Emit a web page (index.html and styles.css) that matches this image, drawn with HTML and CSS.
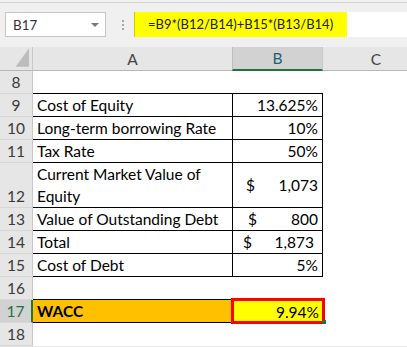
FILE: index.html
```html
<!DOCTYPE html>
<html>
<head>
<meta charset="utf-8">
<link rel="stylesheet" href="styles.css">
</head>
<body>
<div class="toolbar">
  <div class="namebox"><span>B17</span><span class="caret"></span></div>
  <div class="grip"><i></i><i></i><i></i></div>
  <div class="formula"><span class="formula-text">=B9*(B12/B14)+B15*(B13/B14)</span></div>
</div>
<div class="sheet">
  <div class="corner"><svg width="33" height="23" viewBox="0 0 33 23"><polygon points="30,1 30,20 16,20" fill="#bdbdbd"/></svg></div>
  <div class="ch">A</div>
  <div class="ch sel">B</div>
  <div class="ch">C</div>

  <div class="rh">8</div><div class="c top"></div><div class="c top"></div><div class="c"></div>
  <div class="rh">9</div><div class="c t">Cost of Equity</div><div class="c t num">13.625%</div><div class="c"></div>
  <div class="rh">10</div><div class="c t">Long-term borrowing Rate</div><div class="c t num">10%</div><div class="c"></div>
  <div class="rh">11</div><div class="c t">Tax Rate</div><div class="c t num">50%</div><div class="c"></div>
  <div class="rh">12</div><div class="c t wrap">Current Market Value of<br>Equity</div><div class="c t acct"><span>$</span><span>1,073</span></div><div class="c"></div>
  <div class="rh">13</div><div class="c t">Value of Outstanding Debt</div><div class="c t acct acct-wide"><span>$</span><span>800</span></div><div class="c"></div>
  <div class="rh">14</div><div class="c t">Total</div><div class="c t acct acct-shift"><span>$</span><span>1,873</span></div><div class="c"></div>
  <div class="rh">15</div><div class="c t">Cost of Debt</div><div class="c t num">5%</div><div class="c"></div>
  <div class="rh">16</div><div class="c top"></div><div class="c"></div><div class="c"></div>
  <div class="rh sel">17</div><div class="c wacc">WACC</div><div class="c num result">9.94%<span class="handle"></span></div><div class="c"></div>
  <div class="rh">18</div><div class="c"></div><div class="c"></div><div class="c"></div>
</div>
</body>
</html>
```

FILE: styles.css
```css
html, body {
  margin: 0;
  padding: 0;
  background: #e6e6e6;
  overflow: hidden;
}

.toolbar {
  height: 47px;
  box-sizing: border-box;
  padding: 12px 0 0 5px;
  display: flex;
  align-items: flex-start;
  background: linear-gradient(#f0f0f0 0 2px, #d5d5d5 2px 3px, #f0f0f0 3px);
  font-family: Lato, "Liberation Sans", sans-serif;
  font-size: 13px;
}

.namebox {
  width: 101px;
  height: 25px;
  box-sizing: border-box;
  border: 1px solid #c6c6c6;
  background: #fff;
  display: flex;
  align-items: center;
  justify-content: space-between;
  padding: 0 6px 0 7px;
  color: #333;
  font-size: 13.4px;
}

.caret {
  width: 0;
  height: 0;
  border-left: 4px solid transparent;
  border-right: 4px solid transparent;
  border-top: 4px solid #7a7a7a;
}

.grip {
  margin-left: 14px;
  width: 5px;
  height: 25px;
  display: flex;
  flex-direction: column;
  align-items: center;
  justify-content: center;
  gap: 2px;
}

.grip i {
  display: block;
  width: 2px;
  height: 2px;
  background: #a6a6a6;
}

.formula {
  margin-left: 9px;
  flex: 1;
  height: 25px;
  background: #fff;
  display: flex;
}

.formula-text {
  width: 213px;
  box-sizing: border-box;
  background: #ffff00;
  border-left: 1px solid #c9c900;
  padding-left: 13px;
  line-height: 25px;
  color: #222;
  white-space: nowrap;
}

.sheet {
  display: grid;
  width: 430px;
  grid-template-columns: 33px 200px 90px 107px;
  grid-template-rows: 24px 23px 23px 23px 23px 45px 23px 23px 23px 23px 23px 23px 23px;
  font-family: Lato, "Liberation Sans", sans-serif;
  font-size: 15.5px;
  color: #000;
}

.corner {
  background: #e6e6e6;
  border-right: 1px solid #c8c8c8;
  border-bottom: 1px solid #b8b8b8;
  box-sizing: border-box;
  display: flex;
}

.ch {
  background: #e6e6e6;
  border-right: 1px solid #c8c8c8;
  border-bottom: 1px solid #b8b8b8;
  box-sizing: border-box;
  display: flex;
  align-items: center;
  justify-content: center;
  color: #444;
}

.ch.sel {
  background: #d2d2d2;
  border-bottom: 2px solid #217346;
  border-left: 1px solid #bdbdbd;
  margin-left: -1px;
  color: #1d5f74;
}

.rh {
  background: #e6e6e6;
  border-right: 1px solid #c8c8c8;
  border-bottom: 1px solid #d6d6d6;
  box-sizing: border-box;
  display: flex;
  align-items: flex-end;
  justify-content: center;
  line-height: 22px;
  color: #3a3a3a;
}

.rh.sel {
  background: #d2d2d2;
  border-right: 2px solid #217346;
  color: #217346;
}

.c {
  background: #fff;
  box-sizing: border-box;
  display: flex;
  align-items: center;
  padding: 0 4px;
  line-height: 22px;
  white-space: nowrap;
}

.top {
  border-bottom: 1px solid #000;
}

.t {
  border-right: 1px solid #000;
  border-bottom: 1px solid #000;
}

.wrap {
  align-items: center;
}

.num {
  justify-content: flex-end;
}

.acct {
  justify-content: space-between;
  padding-left: 13px;
}

.acct-wide {
  padding-left: 15px;
}

.acct-shift {
  padding-left: 10px;
  padding-right: 8px;
}

.wacc {
  background: #ffc000;
  border-bottom: 1px solid #000;
  font-weight: bold;
}

.result {
  background: #ffff00;
  position: relative;
}

.result::after {
  content: "";
  position: absolute;
  top: -2px;
  left: -2px;
  right: -2px;
  bottom: -1px;
  border: 3px solid #ff0000;
}

.handle {
  position: absolute;
  right: -3px;
  bottom: -1px;
  width: 4px;
  height: 4px;
  background: #217346;
  z-index: 1;
}
```
